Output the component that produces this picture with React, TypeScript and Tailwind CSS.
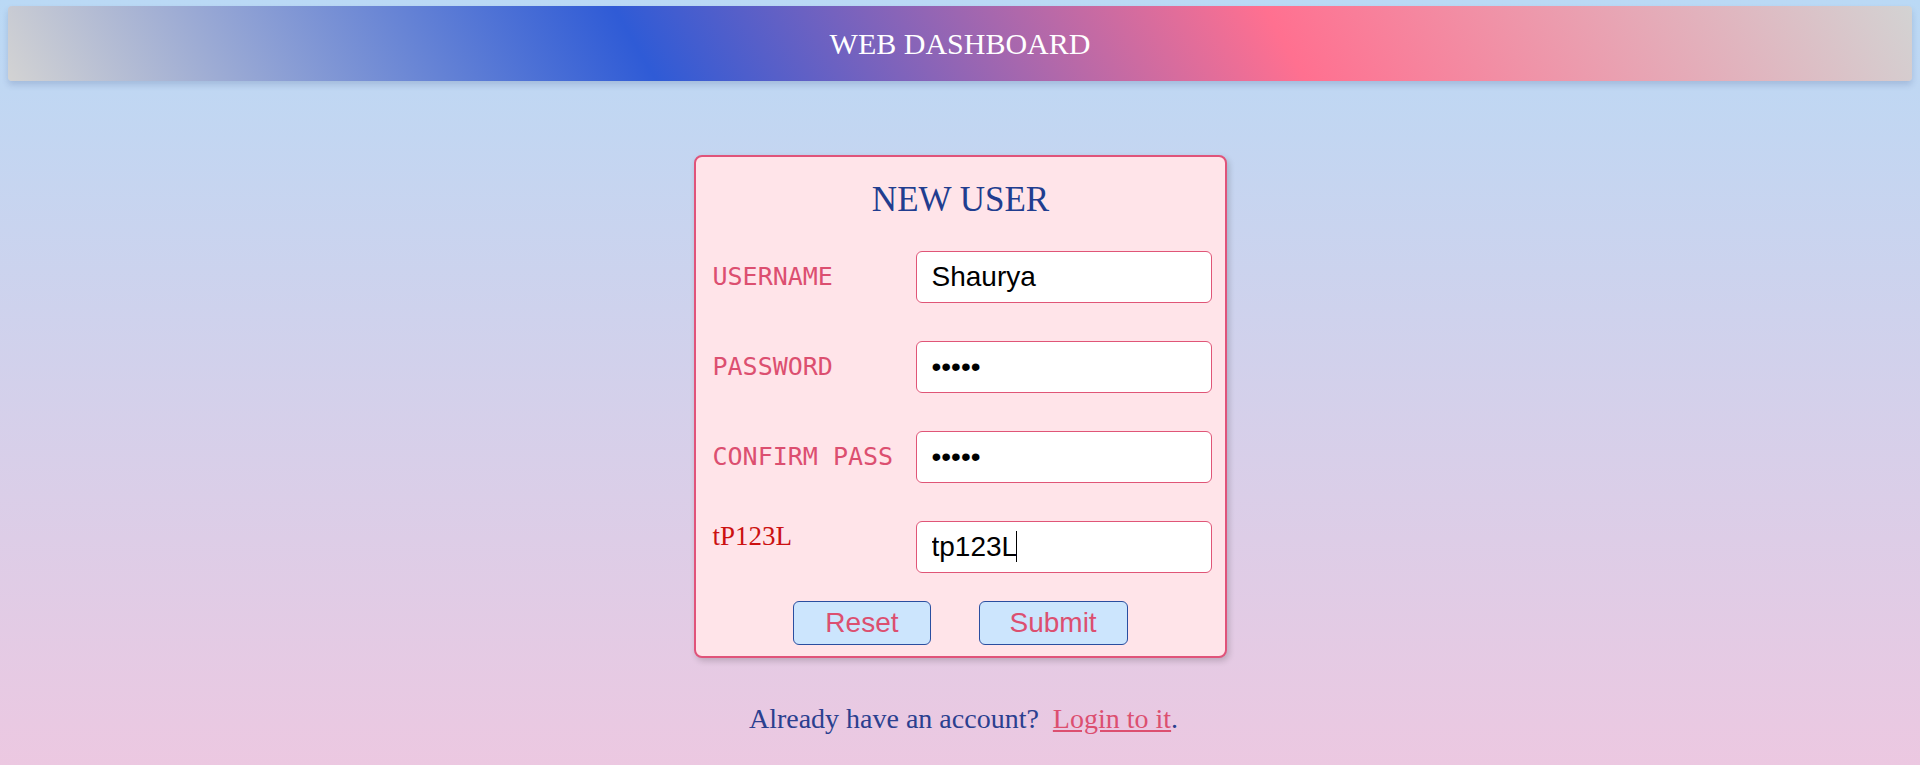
import React from "react";

const serif = "font-['Liberation_Serif','Times_New_Roman',serif]";
const mono = "font-['DejaVu_Sans_Mono','Liberation_Mono',monospace]";
const sans = "font-['Liberation_Sans',Arial,sans-serif]";

function Row({ label, children, top }: { label: React.ReactNode; children: React.ReactNode; top?: boolean }) {
  return (
    <div className={`flex justify-between ${top ? "items-start" : "items-center"}`}>
      {label}
      {children}
    </div>
  );
}

const inputCls = `w-[296px] h-[52px] rounded-[6px] border border-[#e05577] bg-white pl-[15px] text-[28px] text-black outline-none ${sans}`;

export default function App() {
  return (
    <div className="min-h-[765px] w-full bg-[linear-gradient(180deg,#bad9f5_0%,#ecc8e1_100%)] px-2 pt-[6px] pb-8">
      <header
        className={`flex h-[75px] items-center justify-center rounded-[4px] bg-[linear-gradient(60deg,#d3d3d3_0%,#2f5bd6_33.3%,#ff7090_66.7%,#d3d3d3_100%)] shadow-[0_4px_6px_rgba(40,60,120,0.18)] ${serif}`}
      >
        <h1 className="text-[30px] leading-none text-white">WEB DASHBOARD</h1>
      </header>

      <div className="mx-auto mt-[74px] w-[533px] rounded-[8px] border-2 border-[#e0537a] bg-[#ffe4e9] pl-[17px] pr-[13px] pt-[23px] pb-[11px] shadow-[2px_3px_6px_rgba(0,0,0,0.18)]">
        <h2 className={`pr-[3px] text-center text-[35px] leading-[40px] text-[#213d8f] ${serif}`}>NEW USER</h2>

        <div className="mt-[31px] flex flex-col gap-[38px]">
          <Row label={<span className={`text-[25px] text-[#dc4f70] ${mono}`}>USERNAME</span>}>
            <input className={inputCls} defaultValue="Shaurya" readOnly />
          </Row>
          <Row label={<span className={`text-[25px] text-[#dc4f70] ${mono}`}>PASSWORD</span>}>
            <input className={inputCls} type="password" defaultValue="12345" readOnly />
          </Row>
          <Row label={<span className={`text-[25px] text-[#dc4f70] ${mono}`}>CONFIRM PASS</span>}>
            <input className={inputCls} type="password" defaultValue="12345" readOnly />
          </Row>
          <Row top label={<span className={`text-[27px] leading-[31px] text-[#cc1111] ${serif}`}>tP123L</span>}>
            <div className="relative">
              <input className={inputCls} defaultValue="tp123L" readOnly />
              <span className="absolute left-[100px] top-[10px] h-[31px] w-px bg-black" />
            </div>
          </Row>
        </div>

        <div className={`mt-[28px] flex justify-center gap-[48px] pr-[3px] ${sans}`}>
          <button className="h-[44px] rounded-[6px] border border-[#2a4ea0] bg-[#cce5fd] px-[31px] text-[28px] leading-none text-[#dc4f70]">
            Reset
          </button>
          <button className="h-[44px] rounded-[6px] border border-[#2a4ea0] bg-[#cce5fd] px-[30px] text-[28px] leading-none text-[#dc4f70]">
            Submit
          </button>
        </div>
      </div>

      <p className={`mt-[45px] pl-[7px] text-center text-[28px] leading-[32px] text-[#2b3f8f] ${serif}`}>
        Already have an account?{"\u00a0 "}
        <a href="#" className="text-[#dc4f70] underline">
          Login to it
        </a>
        .
      </p>
    </div>
  );
}
